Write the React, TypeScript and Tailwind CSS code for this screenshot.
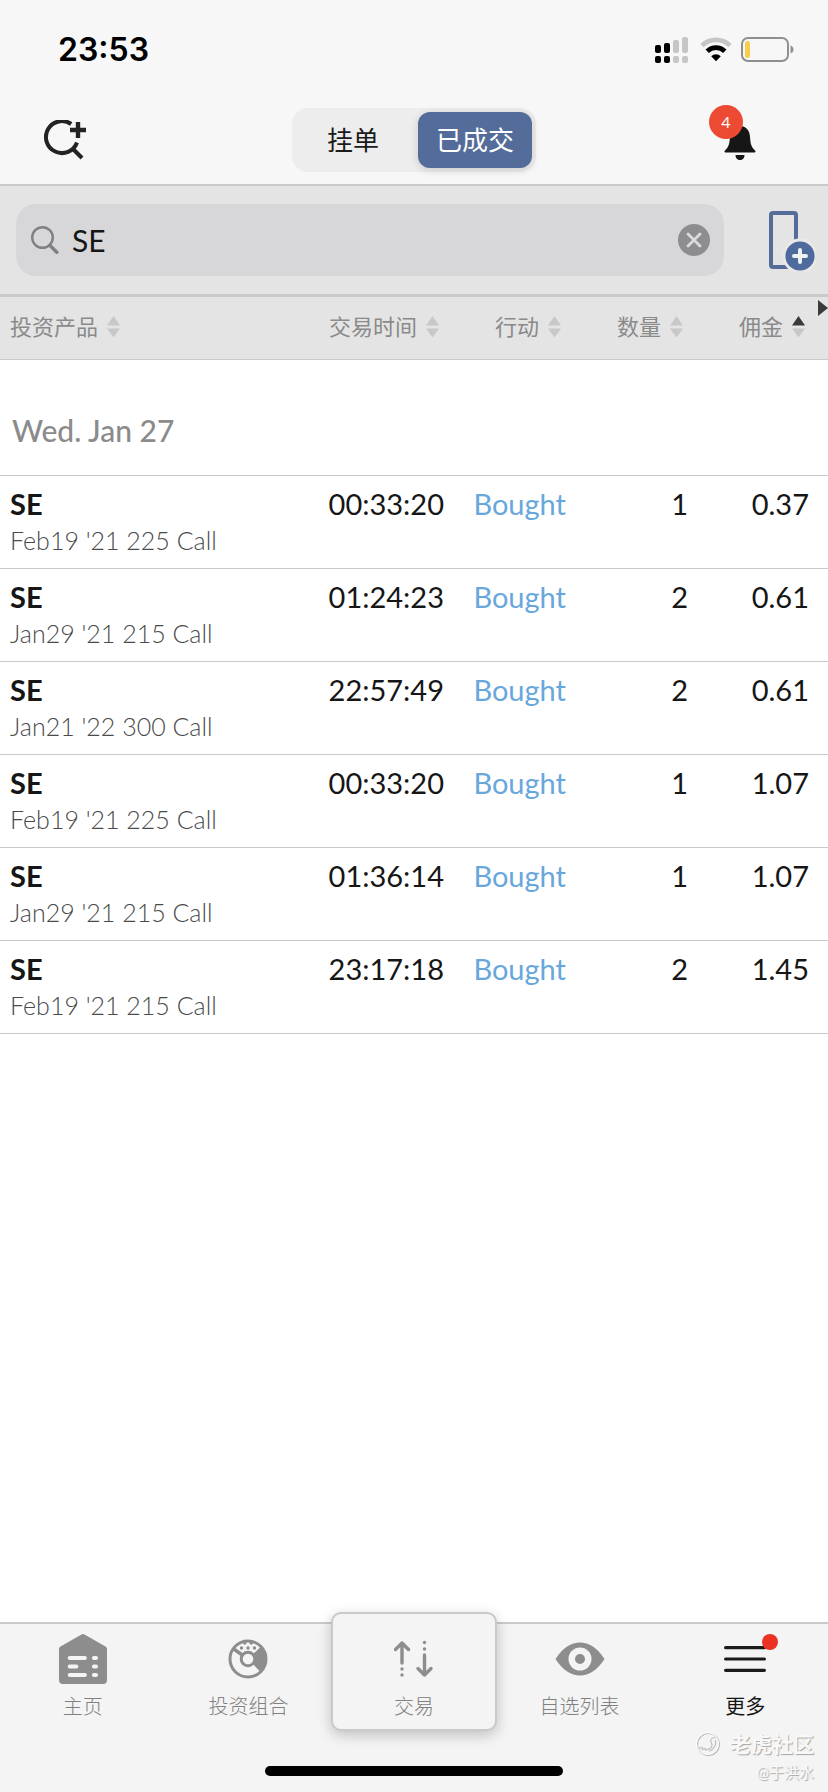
import { useState } from "react";

const columns = [
  { label: "投资产品", sorted: false },
  { label: "交易时间", sorted: false },
  { label: "行动", sorted: false },
  { label: "数量", sorted: false },
  { label: "佣金", sorted: true },
];

const trades = [
  { symbol: "SE", contract: "Feb19 '21 225 Call", time: "00:33:20", action: "Bought", qty: 1, fee: "0.37" },
  { symbol: "SE", contract: "Jan29 '21 215 Call", time: "01:24:23", action: "Bought", qty: 2, fee: "0.61" },
  { symbol: "SE", contract: "Jan21 '22 300 Call", time: "22:57:49", action: "Bought", qty: 2, fee: "0.61" },
  { symbol: "SE", contract: "Feb19 '21 225 Call", time: "00:33:20", action: "Bought", qty: 1, fee: "1.07" },
  { symbol: "SE", contract: "Jan29 '21 215 Call", time: "01:36:14", action: "Bought", qty: 1, fee: "1.07" },
  { symbol: "SE", contract: "Feb19 '21 215 Call", time: "23:17:18", action: "Bought", qty: 2, fee: "1.45" },
];

function StatusBar() {
  return (
    <div className="flex h-24 items-center justify-between pt-1 pl-[58px] pr-[34px]">
      <span className="font-['Inter',sans-serif] text-[32px] leading-9 font-semibold text-black">
        23:53
      </span>

      <div className="flex items-center">
        {/* Dual SIM signal */}
        <svg width="34" height="26" viewBox="0 0 34 26" className="mr-[11px]">
          <g fill="#000">
            <rect x="0" y="8" width="6" height="8" rx="2" />
            <rect x="9" y="6" width="6" height="10" rx="2" />
            <rect x="0" y="19" width="6" height="7" rx="2" />
            <rect x="9" y="19" width="6" height="7" rx="2" />
          </g>
          <g fill="#c6c6c6">
            <rect x="18" y="3" width="6" height="13" rx="2" />
            <rect x="27" y="0" width="6" height="16" rx="2" />
            <rect x="18" y="19" width="6" height="7" rx="2" />
            <rect x="27" y="19" width="6" height="7" rx="2" />
          </g>
        </svg>

        <svg width="32" height="26" viewBox="0 0 32 26" className="mr-[9px]" fill="none">
          <path d="M2 8.6a20 20 0 0 1 28 0" stroke="#c6c6c6" strokeWidth="4.6" />
          <path d="M7.2 14.2a12.6 12.6 0 0 1 17.6 0" stroke="#000" strokeWidth="4.8" />
          <path d="M16 24.2l-4.8-4.9a6.8 6.8 0 0 1 9.6 0z" fill="#000" />
        </svg>

        <svg width="53" height="26" viewBox="0 0 53 26">
          <rect x="1" y="1" width="46" height="23" rx="6" fill="none" stroke="#8f8f91" strokeWidth="2" />
          <rect x="4" y="4" width="5" height="17" rx="2.5" fill="#f5cf4b" />
          <path d="M49.5 8.5c4 1.200 4 6.800 0 8z" fill="#8f8f91" />
        </svg>
      </div>
    </div>
  );
}

function TopBar() {
  const [tab, setTab] = useState("filled");
  const active = "h-14 w-[114px] rounded-xl bg-[#536c99] text-white shadow-[0_2px_10px_rgba(0,0,0,0.15)]";
  const idle = "h-14 w-[114px] rounded-xl text-[#1b1b1b]";

  return (
    <div className="grid h-[88px] grid-cols-[1fr_auto_1fr] items-center pl-11 pr-[72px]">
      <button type="button" aria-label="添加搜索" className="justify-self-start">
        <svg width="44" height="40" viewBox="0 0 44 40" fill="none" stroke="#232323" strokeWidth="4">
          <path d="M27.200 4A16 16 0 1 0 33 22.500" />
          <path d="M29 29l9 9" />
          <path d="M34 2v16M26 10h16" strokeWidth="4.400" />
        </svg>
      </button>

      <div className="ml-7 flex h-16 items-center justify-between gap-2 rounded-2xl bg-[#ededed] px-1 text-[26px] leading-9">
        <button type="button" onClick={() => setTab("open")} className={tab === "open" ? active : idle}>
          挂单
        </button>
        <button type="button" onClick={() => setTab("filled")} className={tab === "filled" ? active : idle}>
          已成交
        </button>
      </div>

      <button type="button" aria-label="通知" className="relative justify-self-end">
        <svg width="32" height="40" viewBox="0 0 32 40" fill="#161616">
          <path d="M16 6c-6 0-9.500 4.500-10 10.500C5.500 24 5 26.500 1 30.500c-1 1-.6 1.900.5 1.900h29c1.100 0 1.500-.9.500-1.900-4-4-4.500-6.500-5-14C25.500 10.500 22 6 16 6z" />
          <path d="M11.500 35h9c0 3-2 5-4.500 5s-4.500-2-4.500-5z" />
        </svg>
        <span className="absolute -top-[15px] -left-[15px] flex h-[34px] w-[34px] items-center justify-center rounded-full bg-[#ec4a33] text-base text-white">
          4
        </span>
      </button>
    </div>
  );
}

function SearchBar() {
  const [query, setQuery] = useState("SE");

  return (
    <div className="flex items-center gap-11 border-b-[3px] border-[#c9c9c9] bg-[#e4e4e4] py-[18px] pl-4 pr-3">
      <div className="flex h-[72px] flex-1 items-center rounded-[20px] bg-[#d7d7d9] pl-[15px] pr-[14px]">
        <svg width="28" height="30" viewBox="0 0 28 30" fill="none" stroke="#808083">
          <circle cx="11.500" cy="12.500" r="10.300" strokeWidth="2.400" />
          <path d="M18.800 20.200l7 7" strokeWidth="3.400" strokeLinecap="round" />
        </svg>
        <input
          type="text"
          aria-label="搜索"
          value={query}
          onChange={(e) => setQuery(e.target.value)}
          className="ml-[13px] h-12 min-w-0 flex-1 bg-transparent text-[30px] leading-9 text-[#161616] outline-none"
        />
        <button type="button" aria-label="清除" onClick={() => setQuery("")}>
          <svg width="32" height="32" viewBox="0 0 32 32">
            <circle cx="16" cy="16" r="16" fill="#8d8d91" />
            <path d="M10 10l12 12M22 10L10 22" stroke="#dcdcde" strokeWidth="2.800" strokeLinecap="round" />
          </svg>
        </button>
      </div>

      <button type="button" aria-label="添加列">
        <svg width="48" height="62" viewBox="0 0 48 62">
          <rect x="3" y="4" width="25" height="54" rx="2" fill="none" stroke="#536c99" strokeWidth="4" />
          <circle cx="32" cy="47" r="17.500" fill="#e9e9e9" />
          <circle cx="32" cy="47" r="14.600" fill="#4f6b9e" />
          <path d="M32 41v12M26 47h12" stroke="#eef0f3" strokeWidth="4" strokeLinecap="round" />
        </svg>
      </button>
    </div>
  );
}

function SortIcon({ sorted }: { sorted: boolean }) {
  return (
    <svg width="13" height="22" viewBox="0 0 13 22">
      <path d="M6.500 0L13 9.500H0z" fill={sorted ? "#3a3a3a" : "#c8c8c8"} />
      <path d="M6.500 21.500L13 12.500H0z" fill="#c8c8c8" />
    </svg>
  );
}

function TradesTable() {
  return (
    <div className="relative">
      <table className="w-full table-fixed border-separate border-spacing-0 text-right whitespace-nowrap">
        <colgroup>
          <col />
          <col className="w-[122px]" />
          <col className="w-[122px]" />
          <col className="w-[122px]" />
          <col className="w-[135px]" />
        </colgroup>

        <thead>
          <tr>
            {columns.map((column) => (
              <th
                key={column.label}
                className="h-[63px] border-b border-[#c9c9c9] bg-[#e4e4e4] pr-2.5 pb-0.5 font-normal first:pl-2.5 first:text-left last:pr-[23px]"
              >
                <button
                  type="button"
                  className="inline-flex items-center gap-[9px] align-middle text-[22px] leading-8 text-[#8a8a8a]"
                >
                  {column.label}
                  <SortIcon sorted={column.sorted} />
                </button>
              </th>
            ))}
          </tr>
        </thead>

        <tbody>
          <tr>
            <th
              colSpan={5}
              className="border-b border-[#c9c9c9] pt-[52px] pb-[27px] pl-3 text-left text-[30px] leading-9 font-medium text-[#8b8b8b]"
            >
              Wed. Jan 27
            </th>
          </tr>

          {trades.map((trade, index) => (
            <tr
              key={index}
              className="align-top text-[29px] leading-9 text-[#161616] *:border-b *:border-[#c9c9c9] *:pt-2.5 *:pb-2.5"
            >
              <td className="pl-2.5 text-left">
                <div className="font-bold">{trade.symbol}</div>
                <div className="text-[25px] leading-9 font-light text-[#4a4a4a]">{trade.contract}</div>
              </td>
              <td className="pr-[5px]">{trade.time}</td>
              <td className="pr-[5px] text-[#68a7dc]">{trade.action}</td>
              <td className="pr-[5px]">{trade.qty}</td>
              <td className="pr-[19px]">{trade.fee}</td>
            </tr>
          ))}
        </tbody>
      </table>

      {/* More columns to the right */}
      <svg width="10" height="16" viewBox="0 0 10 16" className="absolute top-[3px] right-0">
        <path d="M0 0l10 8-10 8z" fill="#3a3a3a" />
      </svg>
    </div>
  );
}

function HomeIcon() {
  return (
    <svg width="48" height="50" viewBox="0 0 48 50">
      <path
        d="M22.500.5q1.500-.9 3 0L46.500 12.500q1.500.9 1.500 2.600V46q0 4-4 4H4q-4 0-4-4V15.100q0-1.700 1.500-2.600z"
        fill="#8d8d8d"
      />
      <path
        d="M10.800 24h15M10.800 32.500h6.500M10.800 41h15M35 24h2M35 32.500h2M35 41h2"
        stroke="#f4f4f4"
        strokeWidth="4.200"
        strokeLinecap="round"
      />
    </svg>
  );
}

function PortfolioIcon() {
  return (
    <svg width="40" height="40" viewBox="0 0 40 40">
      <path d="M20 20L33 7.500A18 18 0 0 1 32.500 33z" fill="#8d8d8d" />
      <g fill="none" stroke="#8d8d8d">
        <circle cx="20" cy="20" r="18" strokeWidth="3" />
        <path d="M5 9.500l10 7" strokeWidth="3.400" />
        <circle cx="20" cy="20" r="6.800" fill="#f4f4f4" strokeWidth="3" />
      </g>
      <g fill="#8d8d8d">
        <circle cx="13.500" cy="9" r="1.700" />
        <circle cx="20" cy="9" r="1.700" />
        <circle cx="26.500" cy="9" r="1.700" />
        <circle cx="16.800" cy="4" r="1.700" />
        <circle cx="23.200" cy="4" r="1.700" />
      </g>
    </svg>
  );
}

function TradeIcon() {
  return (
    <svg width="40" height="38" viewBox="0 0 40 38" fill="none" stroke="#8d8d8d" strokeWidth="3.400">
      <path d="M8 23V3M1.500 9.500L8 3l6.500 6.500" strokeLinecap="round" strokeLinejoin="round" />
      <path d="M30.500 15v20M24 28.500l6.500 6.500 6.500-6.500" strokeLinecap="round" strokeLinejoin="round" />
      <g fill="#8d8d8d" stroke="none">
        <circle cx="8" cy="29" r="1.700" />
        <circle cx="8" cy="35" r="1.700" />
        <circle cx="30.500" cy="2.500" r="1.700" />
        <circle cx="30.500" cy="9" r="1.700" />
      </g>
    </svg>
  );
}

function WatchIcon() {
  return (
    <svg width="50" height="34" viewBox="0 0 50 34">
      <path d="M.5 17C8 5.500 16 .5 25 .5S42 5.500 49.500 17C42 28.500 34 33.500 25 33.500S8 28.500.5 17z" fill="#8d8d8d" />
      <circle cx="25" cy="17" r="11.500" fill="#f4f4f4" />
      <circle cx="25" cy="17" r="5" fill="#8d8d8d" />
    </svg>
  );
}

function MoreIcon() {
  return (
    <span className="relative">
      <svg width="42" height="28" viewBox="0 0 42 28" stroke="#1b1b1b" strokeWidth="3.200" strokeLinecap="round">
        <path d="M1.600 2.700h38.800M1.600 14h38.800M1.600 25.300h38.800" />
      </svg>
      <span className="absolute -top-[11px] -right-3 h-4 w-4 rounded-full bg-[#ea3323]" />
    </span>
  );
}

const navItems = [
  { label: "主页", icon: <HomeIcon /> },
  { label: "投资组合", icon: <PortfolioIcon /> },
  { label: "交易", icon: <TradeIcon />, raised: true },
  { label: "自选列表", icon: <WatchIcon /> },
  { label: "更多", icon: <MoreIcon />, current: true },
];

function BottomNav() {
  return (
    <footer className="relative border-t-2 border-[#c9c9c9] bg-[#f4f4f4] pb-4">
      <nav className="grid grid-cols-5 items-start">
        {navItems.map((item) => (
          <a
            key={item.label}
            href="#"
            className={
              item.raised
                ? "-mt-3 flex flex-col items-center rounded-[10px] border-2 border-[#c9c9c9] bg-[#f4f4f4] pt-5 pb-[9px] shadow-[0_4px_14px_rgba(0,0,0,0.22)]"
                : "flex flex-col items-center pt-2.5"
            }
          >
            <span className="flex h-[50px] items-center">{item.icon}</span>
            <span
              className={
                item.current
                  ? "mt-2 text-xl leading-7 text-[#161616]"
                  : "mt-2 text-xl leading-7 font-light text-[#808080]"
              }
            >
              {item.label}
            </span>
          </a>
        ))}
      </nav>

      <div className="mx-auto mt-[35px] h-2.5 w-[36%] rounded-full bg-black" />

      {/* Community stamp */}
      <div className="absolute right-3.5 bottom-1.5 flex flex-col items-end text-[#f8f8f8] [text-shadow:1px_1px_1px_#a6a6a6]">
        <div className="flex items-center gap-2.5 text-[21px] leading-7 font-bold">
          <svg width="24" height="24" viewBox="0 0 24 24" fill="none" strokeLinecap="round">
            <g stroke="#bdbdbd" strokeWidth="1.200">
              <circle cx="12.500" cy="12.500" r="11" />
              <path d="M19 5.500c-4 .5-5.500 3-3.500 5.500 1.500 3-.5 6-3.500 6.500M3.500 16l2.500-.5.500 2 2.500-1 .5 1.500 3-1M19.500 8.500c1 4-1.500 9-6 10.500" />
            </g>
            <circle cx="11.500" cy="11.500" r="11" stroke="#fff" />
          </svg>
          老虎社区
        </div>
        <div className="text-[15px] leading-7">@于洪水</div>
      </div>
    </footer>
  );
}

export default function App() {
  return (
    <div className="flex min-h-screen flex-col bg-white font-['Lato','Noto_Sans_CJK_SC',sans-serif]">
      <header className="border-b-2 border-[#c9c9c9] bg-[#f7f7f7]">
        <StatusBar />
        <TopBar />
      </header>

      <main className="flex-1">
        <SearchBar />
        <TradesTable />
      </main>

      <BottomNav />
    </div>
  );
}
